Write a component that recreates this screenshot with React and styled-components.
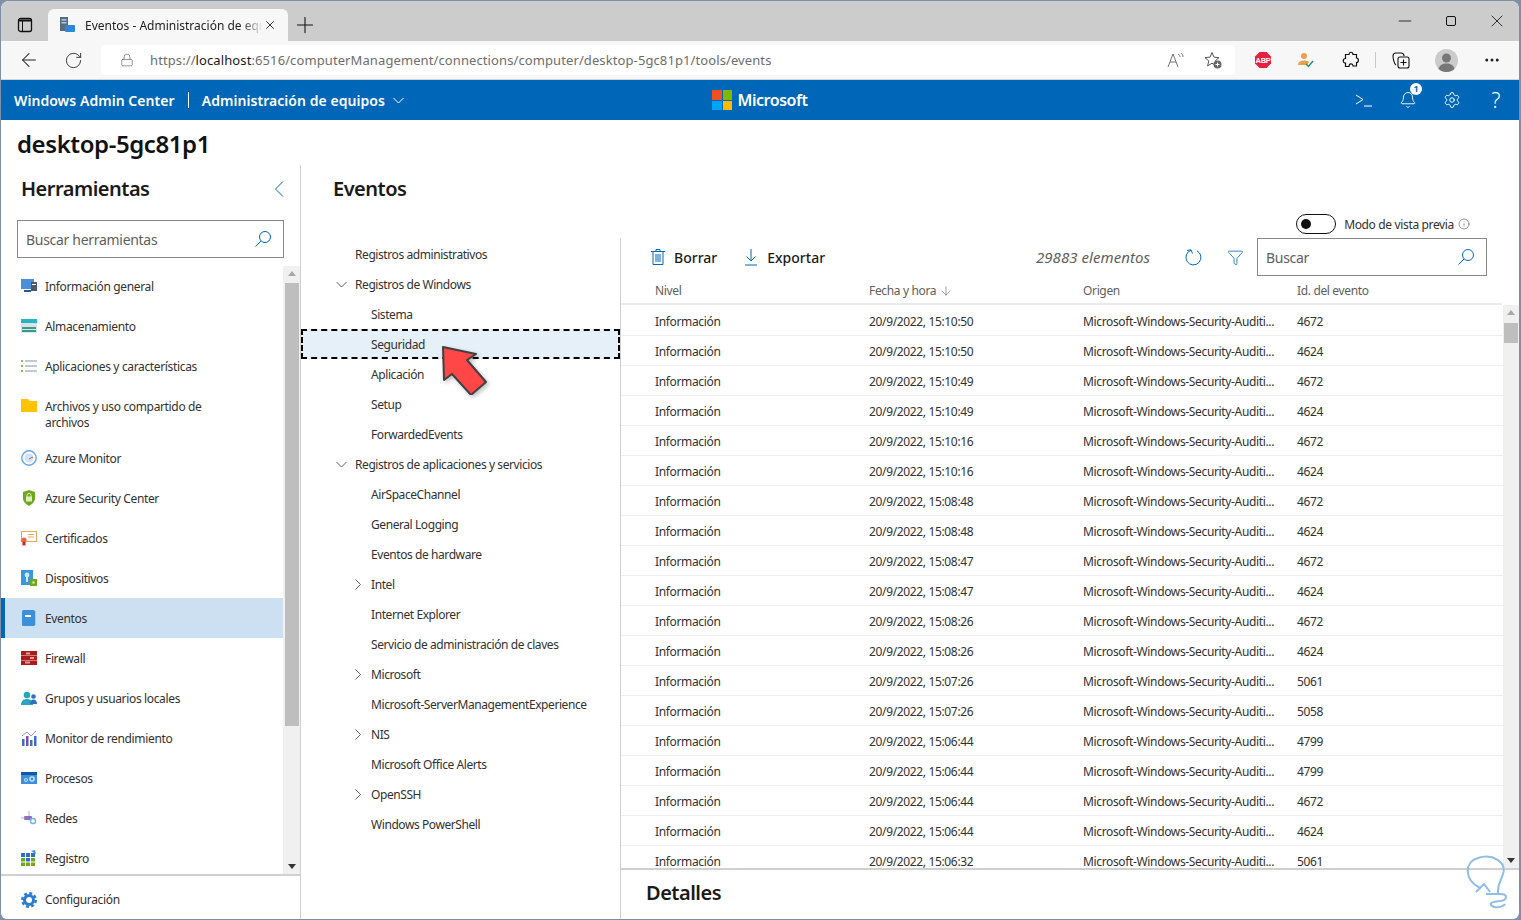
import styled, { createGlobalStyle } from "styled-components";
import { ArrowLeft, RotateCw, Lock, Plus, X, Minus, Funnel, ArrowDown, Bell, Settings, Ellipsis, Info } from "lucide-react";

const FONT = `"Noto Sans", "Open Sans", sans-serif`;

const Global = createGlobalStyle`
    html, body {
        margin: 0;
        height: 920px;
        overflow: hidden;
        background: #7d90a8;
    }
    * { box-sizing: border-box; }
`

const Win = styled.div`
    position: relative;
    width: 1518px;
    height: 918px;
    margin: 1px 0 0 1px;
    background: white;
    border-radius: 8px 8px 6px 6px;
    overflow: hidden;
    display: flex;
    flex-direction: column;
    font-family: ${FONT};
    font-size: 12px;
    letter-spacing: -0.35px;
    color: #323130;
`

/* browser chrome */
const TabStrip = styled.div`
    height: 40px;
    flex: none;
    background: #cccccc;
    display: flex;
    align-items: flex-end;
    padding-left: 47px;
    position: relative;
`
const SideToggle = styled.div`
    position: absolute;
    left: 16px;
    top: 16px;
    display: flex;
`
const Tab = styled.div`
    width: 240px;
    height: 32px;
    background: #f7f7f7;
    border-radius: 6px 6px 0 0;
    display: flex;
    align-items: center;
    padding: 0 10px 0 12px;
    color: #222;
    letter-spacing: 0;
`
const TabTitle = styled.span`
    margin-left: 10px;
    width: 178px;
    overflow: hidden;
    white-space: nowrap;
    mask-image: linear-gradient(to right, black 88%, transparent);
`
const NewTab = styled.div`
    display: flex;
    color: #111;
    margin: 0 0 3px 4px;
`
const WinControls = styled.div`
    margin-left: auto;
    display: flex;
    gap: 26px;
    align-self: flex-start;
    padding: 10px 12px 0 0;
    color: #111;
`
const BrowserBar = styled.div`
    height: 39px;
    flex: none;
    background: #f7f7f7;
    display: flex;
    align-items: center;
    padding: 0 0 0 17px;
    border-bottom: 1px solid #d4d4d4;
    color: #222;
`
const BarButton = styled.div`
    width: ${p => p.$w || 44}px;
    margin-left: ${p => p.$ml || 0}px;
    display: flex;
    justify-content: center;
    align-items: center;
    flex: none;
`
const AddressBar = styled.div`
    width: 1134px;
    height: 30px;
    margin: 0 6px;
    background: white;
    border-radius: 4px;
    display: flex;
    align-items: center;
    padding: 0 0 0 19px;
    color: #666;
`
const Url = styled.div`
    margin-left: 16px;
    font-size: 13px;
    letter-spacing: 0.1px;
    color: #6d6d6d;
    flex: 1;
    b { font-weight: 400; color: #1a1a1a; }
`
const Separator = styled.div`
    width: 1px;
    height: 16px;
    background: #c8c8c8;
    flex: none;
`

/* blue bar */
const AppBar = styled.div`
    height: 40px;
    flex: none;
    background: #0067b8;
    color: white;
    display: grid;
    grid-template-columns: 1fr auto 1fr;
    align-items: center;
    font-size: 14px;
    font-weight: 600;
    letter-spacing: 0.05px;
`
const AppBarLeft = styled.div`
    display: flex;
    align-items: center;
    padding-left: 13px;
`
const BarSep = styled.div`
    width: 1px;
    height: 16px;
    background: white;
    margin: 0 13px;
`
const BarChevron = styled.svg`
    margin-left: 8px;
`
const MsLogo = styled.div`
    display: flex;
    align-items: center;
    gap: 5px;
    font-size: 16px;
    letter-spacing: -0.45px;
`
const LogoGrid = styled.div`
    width: 20px;
    height: 20px;
    display: grid;
    grid-template-columns: 1fr 1fr;
    gap: 1px;
`
const LogoCell = styled.div`
    background: ${p => p.$c};
`
const AppBarRight = styled.div`
    display: flex;
    justify-content: flex-end;
    align-items: center;
    padding-right: 1px;
`
const AppBarIcon = styled.div`
    width: 44px;
    display: flex;
    justify-content: center;
    position: relative;
`
const Badge = styled.span`
    position: absolute;
    left: 24px;
    top: -8px;
    width: 12px;
    height: 12px;
    border-radius: 50%;
    background: white;
    color: #0067b8;
    font-size: 9px;
    font-weight: 700;
    line-height: 12px;
    text-align: center;
    letter-spacing: 0;
`
const QMark = styled.span`
    font-size: 21px;
    font-weight: 300;
    line-height: 20px;
`

/* page */
const PageTitle = styled.h1`
    flex: none;
    height: 45px;
    margin: 0;
    padding: 6px 0 0 16px;
    font-size: 24px;
    line-height: 36px;
    font-weight: 600;
    letter-spacing: -0.42px;
    color: #111;
`
const Body = styled.div`
    flex: 1;
    min-height: 0;
    display: flex;
`
const Sidebar = styled.aside`
    width: 300px;
    flex: none;
    border-right: 1px solid #cfcfcf;
    display: flex;
    flex-direction: column;
`
const PanelTitle = styled.h2`
    margin: 0;
    font-size: 20px;
    line-height: 28px;
    font-weight: 600;
    letter-spacing: -0.5px;
    color: #1b1a19;
`
const SideHead = styled.div`
    height: 55px;
    padding: 10px 16px 0 20px;
    display: flex;
    justify-content: space-between;
    flex: none;
`
const Collapse = styled.svg`
    margin-top: 6px;
`
const SearchBox = styled.div`
    flex: none;
    width: ${p => p.$w}px;
    height: 38px;
    margin-left: ${p => p.$ml || 0}px;
    border: 1px solid #8a8886;
    display: flex;
    align-items: center;
    justify-content: space-between;
    padding: 0 11px 0 8px;
    font-size: 14px;
    letter-spacing: -0.3px;
    color: #605e5c;
`
const SideMain = styled.div`
    flex: 1;
    min-height: 0;
    margin-top: 8px;
    display: flex;
`
const NavList = styled.nav`
    flex: 1;
    overflow: hidden;
`
const NavRow = styled.div`
    min-height: 40px;
    padding: 13px 60px 7px ${p => p.$active ? 16 : 20}px;
    display: flex;
    gap: 8px;
    line-height: 16px;
    ${p => p.$active && `
        background: #cce0f1;
        border-left: 4px solid #0067b8;
    `}
`
const NavIcon = styled.svg`
    width: 16px;
    height: 16px;
    flex: none;
    margin-top: -1px;
`
const Scrollbar = styled.div`
    width: ${p => p.$w || 16}px;
    flex: none;
    background: #f0f0f0;
    display: flex;
    flex-direction: column;
    align-items: center;
    position: relative;
    padding-top: ${p => p.$top}px;
`
const Thumb = styled.div`
    width: 14px;
    height: ${p => p.$h}px;
    background: #bebebe;
`
const ArrowUp = styled.div`
    position: absolute;
    top: 5px;
    border: 4px solid transparent;
    border-top: 0;
    border-bottom: 5px solid #a8a8a8;
`
const ArrowDn = styled.div`
    position: absolute;
    bottom: 5px;
    border: 4px solid transparent;
    border-bottom: 0;
    border-top: 5px solid #333;
`
const SideFooter = styled.div`
    height: 45px;
    flex: none;
    border-top: 2px solid #d0d0d0;
    padding: 16px 0 0 20px;
    display: flex;
    gap: 8px;
    line-height: 16px;
`

/* main */
const Main = styled.main`
    flex: 1;
    min-width: 0;
    display: flex;
    flex-direction: column;
`
const MainHead = styled.div`
    height: 73px;
    flex: none;
    padding: 10px 49px 4px 32px;
    display: flex;
    justify-content: space-between;
`
const PreviewToggle = styled.div`
    align-self: flex-end;
    display: flex;
    align-items: center;
    gap: 8px;
    color: #323130;
`
const ToggleTrack = styled.div`
    width: 40px;
    height: 20px;
    border: 1px solid #111;
    border-radius: 10px;
    padding: 4px;
`
const ToggleKnob = styled.div`
    width: 10px;
    height: 10px;
    border-radius: 50%;
    background: #111;
`
const ToggleLabel = styled.span`
    display: flex;
    align-items: center;
    gap: 4px;
`
const Content = styled.div`
    flex: 1;
    min-height: 0;
    display: flex;
`
const Tree = styled.div`
    width: 320px;
    flex: none;
    border-right: 1px solid #cfcfcf;
    padding-top: 1px;
    letter-spacing: -0.42px;
`
const TreeRow = styled.div`
    height: 30px;
    position: relative;
    display: flex;
    align-items: center;
    padding-left: ${p => p.$level ? 51 : 35}px;
    ${p => p.$selected && `
        background: #e5f0f8;
        outline: 2px dashed #000;
        outline-offset: -2px;
    `}
`
const Chevron = styled.span`
    width: 19px;
    flex: none;
    display: flex;
`
const RedCursor = styled.svg`
    position: absolute;
    left: 138px;
    top: 14px;
    filter: drop-shadow(2px 2px 2px rgba(0, 0, 0, 0.25));
`
const Panel = styled.div`
    flex: 1;
    min-width: 0;
    display: flex;
    flex-direction: column;
`
const Toolbar = styled.div`
    height: 38px;
    flex: none;
    display: flex;
    align-items: center;
    padding: 0 32px 0 30px;
`
const ToolButton = styled.div`
    display: flex;
    align-items: center;
    gap: 9px;
    font-size: 14px;
    font-weight: 500;
    letter-spacing: 0;
    color: #1b1a19;
    margin-right: 27px;
`
const Count = styled.span`
    margin-left: auto;
    font-size: 15px;
    font-style: italic;
    letter-spacing: 0.05px;
    color: #605e5c;
`
const ToolIcon = styled.div`
    display: flex;
    color: #0067b8;
    margin-left: ${p => p.$ml}px;
`
const HeadRow = styled.div`
    height: 29px;
    flex: none;
    display: grid;
    grid-template-columns: 214px 214px 214px 1fr;
    align-items: center;
    padding: 2px 0 0 34px;
    margin-right: 17px;
    border-bottom: 2px solid #eaeaea;
    color: #605e5c;
`
const HeadCell = styled.div`
    display: flex;
    align-items: center;
    gap: 3px;
`
const TableWrap = styled.div`
    flex: 1;
    min-height: 0;
    display: flex;
`
const Rows = styled.div`
    flex: 1;
    min-width: 0;
    overflow: hidden;
    padding-top: 1px;
`
const Row = styled.div`
    height: 30px;
    display: grid;
    grid-template-columns: 214px 214px 214px 1fr;
    align-items: center;
    padding: 2px 0 0 34px;
    border-bottom: 1px solid #eeeeee;
`
const Cell = styled.div`
    white-space: nowrap;
`
const Details = styled.div`
    height: 51px;
    flex: none;
    border-top: 2px solid #d0d0d0;
    padding: 9px 0 0 25px;
`
const Mark = styled.svg`
    position: absolute;
    right: 5px;
    bottom: 5px;
`

const navIcons = {
    info: <><rect x="0" y="1" width="13" height="10" fill="#4a90d9" /><rect x="3" y="12" width="7" height="2" fill="#1f5c99" /><rect x="10" y="4" width="6" height="9" fill="#4d5a66" /><rect x="11" y="6" width="4" height="1" fill="#fff" /></>,
    storage: <><rect x="0" y="1" width="16" height="14" fill="#d9e3e6" /><rect x="0" y="1" width="16" height="4" fill="#27b5c4" /><rect x="1" y="9" width="14" height="2" fill="#3a9a8e" /><rect x="1" y="12" width="14" height="2" fill="#3a9a8e" /></>,
    apps: <><path d="M4 3h12M4 8h12M4 13h12" stroke="#7f93a8" strokeWidth="1.2" /><path d="M0 3h2M0 8h2M0 13h2" stroke="#6aa51e" strokeWidth="1.6" /></>,
    folder: <path d="M0 1h7l2 2h7v11H0z" fill="#ffc300" />,
    azure: <><circle cx="8" cy="8" r="7.2" fill="#fff" stroke="#62a8e5" strokeWidth="1.4" /><circle cx="8" cy="8" r="4.6" fill="#cfe5f7" /><path d="M8 9l4-2" stroke="#d9534f" strokeWidth="1" /></>,
    shield: <><path d="M8 0l6 2v6c0 4-3 6-6 8-3-2-6-4-6-8V2z" fill="#6fa81e" /><rect x="5" y="6.5" width="6" height="5" fill="#dcefc0" /><path d="M6 7V5.4a2 2 0 014 0V7" fill="none" stroke="#dcefc0" /></>,
    cert: <><rect x="0.5" y="1.5" width="15" height="10" fill="#fff" stroke="#e8a860" /><path d="M7 4.5h6M7 7h6" stroke="#e8a860" /><circle cx="3" cy="10" r="2.6" fill="#e8663c" /><path d="M1.5 12h3v4l-1.5-1-1.5 1z" fill="#c4262e" /></>,
    devices: <><rect x="0" y="0" width="12" height="15" fill="#3a96dd" /><circle cx="6" cy="5" r="2.4" fill="#cfe8fa" /><path d="M5 7h2v5H5z" fill="#cfe8fa" /><rect x="9" y="9" width="7" height="7" fill="#6fa81e" /><circle cx="12.5" cy="12.5" r="1.3" fill="#cfe3a8" /></>,
    events: <><rect x="1" y="0" width="13" height="16" rx="1.5" fill="#3d8fdc" /><rect x="14" y="1" width="1" height="14" fill="#a9cdee" /><rect x="4" y="5" width="6" height="2" fill="#fff" /></>,
    firewall: <><rect x="0" y="1" width="16" height="14" fill="#a81c1c" /><path d="M0 5.5h16M0 10.5h16" stroke="#e09090" strokeWidth="0.8" /><rect x="5" y="2.5" width="4" height="2" fill="#e2a0a0" /><rect x="9" y="7" width="4" height="2" fill="#e2a0a0" /><rect x="4" y="11.5" width="5" height="2" fill="#e2a0a0" /></>,
    groups: <><circle cx="6" cy="5" r="3.3" fill="#27a5bd" /><path d="M0 15c0-4 2.5-6 6-6s6 2 6 6z" fill="#27a5bd" /><circle cx="12.5" cy="6.5" r="2.3" fill="#2f6fc0" /><path d="M9 14c0-3 1.5-4.500 3.500-4.500S16 11 16 14z" fill="#2f6fc0" /></>,
    perf: <><rect x="1" y="9" width="2.500" height="7" fill="#3d6fc0" /><rect x="5" y="6" width="2.500" height="10" fill="#7a4fb0" /><rect x="9" y="10" width="2.500" height="6" fill="#3d6fc0" /><rect x="13" y="6" width="2.500" height="10" fill="#3d6fc0" /><path d="M1 6l5-4 4 4 5-5" fill="none" stroke="#a98ad0" /></>,
    procs: <><rect x="0" y="2" width="16" height="12" fill="#3d8fdc" /><rect x="0" y="2" width="16" height="3" fill="#0f5aa8" /><circle cx="5" cy="10" r="1.5" fill="none" stroke="#cfe5f7" /><circle cx="11" cy="9" r="2.100" fill="none" stroke="#cfe5f7" strokeWidth="1.400" /></>,
    nets: <><rect x="3" y="6" width="8" height="4" rx="1" fill="#8a6fc0" /><path d="M0 8h4M8 1v5" stroke="#b9a6dc" /><circle cx="12" cy="11" r="2.600" fill="none" stroke="#72b5ea" strokeWidth="1.500" /></>,
    reg: <><rect x="0" y="3" width="4" height="4" fill="#2f6fc0" /><rect x="5" y="3" width="4" height="4" fill="#2f6fc0" /><rect x="10" y="3" width="4" height="4" fill="#2f6fc0" /><rect x="0" y="8" width="4" height="3.500" fill="#6fa81e" /><rect x="5" y="8" width="4" height="3.500" fill="#2f6fc0" /><rect x="10" y="8" width="4" height="3.500" fill="#6fa81e" /><rect x="0" y="12.500" width="4" height="3.500" fill="#6fa81e" /><rect x="5" y="12.500" width="4" height="3.500" fill="#6fa81e" /><rect x="10" y="12.500" width="4" height="3.500" fill="#6fa81e" /><path d="M10 1l4-1 1 4z" fill="#3d8fdc" /></>,
}

const navItems = [
    ["info", "Información general"],
    ["storage", "Almacenamiento"],
    ["apps", "Aplicaciones y características"],
    ["folder", "Archivos y uso compartido de archivos"],
    ["azure", "Azure Monitor"],
    ["shield", "Azure Security Center"],
    ["cert", "Certificados"],
    ["devices", "Dispositivos"],
    ["events", "Eventos"],
    ["firewall", "Firewall"],
    ["groups", "Grupos y usuarios locales"],
    ["perf", "Monitor de rendimiento"],
    ["procs", "Procesos"],
    ["nets", "Redes"],
    ["reg", "Registro"],
]

const treeItems = [
    { label: "Registros administrativos", level: 0 },
    { label: "Registros de Windows", level: 0, icon: "open" },
    { label: "Sistema", level: 1 },
    { label: "Seguridad", level: 1, selected: true },
    { label: "Aplicación", level: 1 },
    { label: "Setup", level: 1 },
    { label: "ForwardedEvents", level: 1 },
    { label: "Registros de aplicaciones y servicios", level: 0, icon: "open" },
    { label: "AirSpaceChannel", level: 1 },
    { label: "General Logging", level: 1 },
    { label: "Eventos de hardware", level: 1 },
    { label: "Intel", level: 1, icon: "closed" },
    { label: "Internet Explorer", level: 1 },
    { label: "Servicio de administración de claves", level: 1 },
    { label: "Microsoft", level: 1, icon: "closed" },
    { label: "Microsoft-ServerManagementExperience", level: 1 },
    { label: "NIS", level: 1, icon: "closed" },
    { label: "Microsoft Office Alerts", level: 1 },
    { label: "OpenSSH", level: 1, icon: "closed" },
    { label: "Windows PowerShell", level: 1 },
]

const events = [
    ["20/9/2022, 15:10:50", "4672"],
    ["20/9/2022, 15:10:50", "4624"],
    ["20/9/2022, 15:10:49", "4672"],
    ["20/9/2022, 15:10:49", "4624"],
    ["20/9/2022, 15:10:16", "4672"],
    ["20/9/2022, 15:10:16", "4624"],
    ["20/9/2022, 15:08:48", "4672"],
    ["20/9/2022, 15:08:48", "4624"],
    ["20/9/2022, 15:08:47", "4672"],
    ["20/9/2022, 15:08:47", "4624"],
    ["20/9/2022, 15:08:26", "4672"],
    ["20/9/2022, 15:08:26", "4624"],
    ["20/9/2022, 15:07:26", "5061"],
    ["20/9/2022, 15:07:26", "5058"],
    ["20/9/2022, 15:06:44", "4799"],
    ["20/9/2022, 15:06:44", "4799"],
    ["20/9/2022, 15:06:44", "4672"],
    ["20/9/2022, 15:06:44", "4624"],
    ["20/9/2022, 15:06:32", "5061"],
]

const SearchGlass = () => (
    <svg width="18" height="18" viewBox="0 0 18 18" fill="none" stroke="#0067b8">
        <circle cx="11" cy="7" r="5.500" />
        <path d="M7 11L1.500 16.500" />
    </svg>
)

const Browser = () => (
    <>
        <TabStrip>
            <SideToggle>
                <svg width="16" height="16" viewBox="0 0 16 16" fill="none" stroke="#111">
                    <rect x="1.500" y="1.500" width="13" height="13" rx="2" strokeWidth="1.300" />
                    <path d="M1.500 3.500h13" strokeWidth="2" />
                    <path d="M5.500 3v11" />
                </svg>
            </SideToggle>
            <Tab>
                <svg width="15" height="16" viewBox="0 0 15 16">
                    <rect x="0" y="0" width="8" height="14" fill="#5b6b7c" />
                    <rect x="1.500" y="2" width="5" height="1.500" fill="#9fd0f0" />
                    <rect x="1.500" y="5" width="5" height="1.500" fill="#9fd0f0" />
                    <rect x="5" y="8" width="10" height="7" rx="1" fill="#2b88d8" />
                </svg>
                <TabTitle>Eventos - Administración de equipos</TabTitle>
                <X size={14} strokeWidth={1.6} />
            </Tab>
            <NewTab><Plus size={26} strokeWidth={1} /></NewTab>
            <WinControls>
                <Minus size={20} strokeWidth={1} />
                <svg width="20" height="20" viewBox="0 0 20 20"><rect x="5.500" y="5.500" width="9" height="9" rx="1.500" fill="none" stroke="#111" /></svg>
                <X size={20} strokeWidth={1} />
            </WinControls>
        </TabStrip>
        <BrowserBar>
            <BarButton $w={22}><ArrowLeft size={22} strokeWidth={1.1} /></BarButton>
            <BarButton $w={44} $ml={11}><RotateCw size={19} strokeWidth={1.1} /></BarButton>
            <AddressBar>
                <Lock size={14} strokeWidth={1.2} />
                <Url>https://<b>localhost</b>:6516/computerManagement/connections/computer/desktop-5gc81p1/tools/events</Url>
                <BarButton $w={36}>
                    <svg width="18" height="16" viewBox="0 0 18 16" fill="none" stroke="#707070"><path d="M1 15L6 2l5 13M3 10h6" /><path d="M11 2c1.500 1 2 2 2 3M14 1c1.500 1 2 2.500 2 4" /></svg>
                </BarButton>
                <BarButton $w={38}>
                    <svg width="18" height="18" viewBox="0 0 18 18">
                        <path d="M8 1.500l2 4.700 5 .4-3.800 3.300 1.200 5-4.400-2.700-4.400 2.700 1.200-5L1 6.600l5-.4z" fill="none" stroke="#555" strokeLinejoin="round" />
                        <circle cx="13.500" cy="13.500" r="4" fill="#666" />
                        <path d="M13.500 11.500v4M11.500 13.500h4" stroke="#fff" />
                    </svg>
                </BarButton>
                <BarButton $w={3} />
            </AddressBar>
            <BarButton $w={44}>
                <svg width="18" height="18" viewBox="0 0 18 18">
                    <path d="M5.500 1h7L17 5.500v7L12.500 17h-7L1 12.500v-7z" fill="#e8203e" />
                    <text x="9" y="11.500" fill="#fff" fontSize="7.500" fontWeight="700" textAnchor="middle" fontFamily="Liberation Sans">ABP</text>
                </svg>
            </BarButton>
            <BarButton $w={42}>
                <svg width="16" height="16" viewBox="0 0 16 16">
                    <circle cx="6" cy="4" r="3" fill="#eaa14d" />
                    <path d="M0 13c0-3 2-4.500 6-4.500s5 1 5 2L9 13z" fill="#eaa14d" />
                    <path d="M8 12l2.500 2.500L15 9" fill="none" stroke="#2e8b78" strokeWidth="1.500" />
                </svg>
            </BarButton>
            <BarButton $w={48}>
                <svg width="18" height="18" viewBox="0 0 18 18" fill="none" stroke="#111" strokeWidth="1.200">
                    <path d="M7 3.500C7 .5 11 .5 11 3.500h3.500V7C17 7 17 11.500 14.500 11.500V15H11C11 12 7 12 7 15.500H3.500v-3.500C.5 12 .5 7.500 3.500 7.500V3.500z" />
                </svg>
            </BarButton>
            <Separator />
            <BarButton $w={49}>
                <svg width="18" height="18" viewBox="0 0 18 18" fill="none" stroke="#111" strokeWidth="1.100">
                    <rect x="6" y="6" width="11" height="11" rx="2" />
                    <path d="M11.500 8.500v6M8.500 11.500h6" />
                    <path d="M4 14C2 13 1 7 1 5c0-2 1-3 3-3h5c2 0 3 1 3 3" />
                </svg>
            </BarButton>
            <BarButton $w={42}>
                <svg width="23" height="23" viewBox="0 0 23 23">
                    <circle cx="11.500" cy="11.500" r="11.500" fill="#cbcbcb" />
                    <circle cx="11.500" cy="9" r="4.500" fill="#777" />
                    <path d="M3.500 20c1-4 4-5.500 8-5.500s7 1.500 8 5.500c-4 4-12 4-16 0z" fill="#777" />
                </svg>
            </BarButton>
            <BarButton $w={50}><Ellipsis size={18} strokeWidth={2} /></BarButton>
        </BrowserBar>
    </>
)

const App = () => (
    <>
        <Global />
        <Win>
            <Browser />
            <AppBar>
                <AppBarLeft>
                    Windows Admin Center
                    <BarSep />
                    Administración de equipos
                    <BarChevron width="11" height="7" viewBox="0 0 11 7" fill="none" stroke="#fff"><path d="M.5 1l5 5 5-5" /></BarChevron>
                </AppBarLeft>
                <MsLogo>
                    <LogoGrid>
                        <LogoCell $c="#f25022" />
                        <LogoCell $c="#7fba00" />
                        <LogoCell $c="#00a4ef" />
                        <LogoCell $c="#ffb900" />
                    </LogoGrid>
                    Microsoft
                </MsLogo>
                <AppBarRight>
                    <AppBarIcon>
                        <svg width="18" height="14" viewBox="0 0 18 14" fill="none" stroke="#fff"><path d="M1 2l7 4.500L1 11M9 13h8" /></svg>
                    </AppBarIcon>
                    <AppBarIcon>
                        <Bell size={18} strokeWidth={1.2} />
                        <Badge>1</Badge>
                    </AppBarIcon>
                    <AppBarIcon><Settings size={18} strokeWidth={1.3} /></AppBarIcon>
                    <AppBarIcon><QMark>?</QMark></AppBarIcon>
                </AppBarRight>
            </AppBar>
            <PageTitle>desktop-5gc81p1</PageTitle>
            <Body>
                <Sidebar>
                    <SideHead>
                        <PanelTitle>Herramientas</PanelTitle>
                        <Collapse width="10" height="16" viewBox="0 0 10 16" fill="none" stroke="#0067b8"><path d="M9 .5L1.500 8 9 15.500" /></Collapse>
                    </SideHead>
                    <SearchBox $w={267} $ml={16}>Buscar herramientas<SearchGlass /></SearchBox>
                    <SideMain>
                        <NavList>
                            {navItems.map(([icon, label]) => (
                                <NavRow key={icon} $active={icon === "events"}>
                                    <NavIcon viewBox="0 0 16 16">{navIcons[icon]}</NavIcon>
                                    <span>{label}</span>
                                </NavRow>
                            ))}
                        </NavList>
                        <Scrollbar $w={17} $top={17}>
                            <ArrowUp />
                            <Thumb $h={443} />
                            <ArrowDn />
                        </Scrollbar>
                    </SideMain>
                    <SideFooter>
                        <svg width="16" height="16" viewBox="0 0 16 16" fill="none" stroke="#2b7cd3">
                            <circle cx="8" cy="8" r="4.500" strokeWidth="3" />
                            <circle cx="8" cy="8" r="6.800" strokeWidth="2.400" strokeDasharray="3 2.340" />
                        </svg>
                        Configuración
                    </SideFooter>
                </Sidebar>
                <Main>
                    <MainHead>
                        <PanelTitle>Eventos</PanelTitle>
                        <PreviewToggle>
                            <ToggleTrack><ToggleKnob /></ToggleTrack>
                            <ToggleLabel>Modo de vista previa <Info size={12} strokeWidth={1} /></ToggleLabel>
                        </PreviewToggle>
                    </MainHead>
                    <Content>
                        <Tree>
                            {treeItems.map(item => (
                                <TreeRow key={item.label} $level={item.level} $selected={item.selected}>
                                    <Chevron>
                                        {item.icon === "open" && (
                                            <svg width="11" height="7" viewBox="0 0 11 7" fill="none" stroke="#605e5c"><path d="M.5 1l5 5 5-5" /></svg>
                                        )}
                                        {item.icon === "closed" && (
                                            <svg width="10" height="11" viewBox="0 0 10 11" fill="none" stroke="#605e5c"><path d="M3.500 .5l5 5-5 5" /></svg>
                                        )}
                                    </Chevron>
                                    {item.label}
                                    {item.selected && (
                                        <RedCursor width="48" height="52" viewBox="0 0 48 52">
                                            <path d="M4 4L37 11 28 17 47 39 32 52 13 31 5 37z" fill="#ff4747" stroke="#404040" strokeWidth="2" strokeLinejoin="round" />
                                        </RedCursor>
                                    )}
                                </TreeRow>
                            ))}
                        </Tree>
                        <Panel>
                            <Toolbar>
                                <ToolButton>
                                    <svg width="14" height="16" viewBox="0 0 14 16" fill="none" stroke="#0067b8">
                                        <path d="M0 2.500h14M5 2.500V.5h4v2" />
                                        <path d="M2 2.500v13h10v-13M5 5v8M7 5v8M9 5v8" />
                                    </svg>
                                    Borrar
                                </ToolButton>
                                <ToolButton>
                                    <svg width="14" height="17" viewBox="0 0 14 17" fill="none" stroke="#0067b8">
                                        <path d="M7 0v12M2.500 7.500L7 12l4.500-4.500M1 16h12" />
                                    </svg>
                                    Exportar
                                </ToolButton>
                                <Count>29883 elementos</Count>
                                <ToolIcon $ml={34}>
                                    <svg width="18" height="18" viewBox="0 0 18 18" fill="none" stroke="#0067b8">
                                        <path d="M7 2.300A7.500 7.500 0 1013 2.800" />
                                        <path d="M8.500 6L7 2.300 3 3" transform="translate(0 -.5)" />
                                    </svg>
                                </ToolIcon>
                                <ToolIcon $ml={25}><Funnel size={17} strokeWidth={1.1} /></ToolIcon>
                                <SearchBox $w={230} $ml={13}>Buscar<SearchGlass /></SearchBox>
                            </Toolbar>
                            <HeadRow>
                                <HeadCell>Nivel</HeadCell>
                                <HeadCell>Fecha y hora <ArrowDown size={14} strokeWidth={1} /></HeadCell>
                                <HeadCell>Origen</HeadCell>
                                <HeadCell>Id. del evento</HeadCell>
                            </HeadRow>
                            <TableWrap>
                                <Rows>
                                    {events.map(([date, id], i) => (
                                        <Row key={i}>
                                            <Cell>Información</Cell>
                                            <Cell>{date}</Cell>
                                            <Cell>Microsoft-Windows-Security-Auditi...</Cell>
                                            <Cell>{id}</Cell>
                                        </Row>
                                    ))}
                                </Rows>
                                <Scrollbar $top={18}>
                                    <ArrowUp />
                                    <Thumb $h={20} />
                                    <ArrowDn />
                                </Scrollbar>
                            </TableWrap>
                            <Details><PanelTitle>Detalles</PanelTitle></Details>
                        </Panel>
                    </Content>
                </Main>
            </Body>
            <Mark width="48" height="60" viewBox="0 0 48 60" fill="none" stroke="#8fbde6" strokeWidth="2">
                <path d="M14 34C-2 26-2 8 12 4 26-1 41 8 37 20 35 27 31 30 32 40" />
                <path d="M10 38l8-8 6 8" />
                <path d="M20 40h14c8 0 8 6 0 7-10 1-12 3-6 6 6 1 10-1 11-3" />
            </Mark>
        </Win>
    </>
)

export default App;
